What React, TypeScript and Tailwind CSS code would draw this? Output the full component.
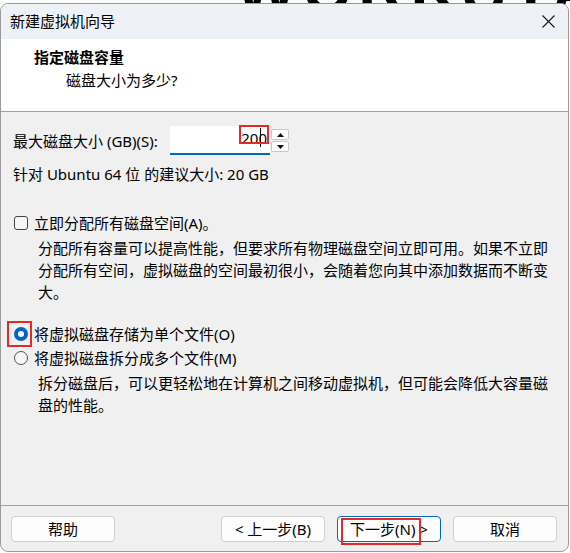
import React from "react";

const F = "font-['Noto_Sans','Noto_Sans_CJK_SC',sans-serif]";

function Btn({ children, primary }: { children: React.ReactNode; primary?: boolean }) {
  return (
    <div
      className={`relative w-[104px] h-[26px] rounded-[4px] border ${
        primary ? "border-[#0067c0]" : "border-[#d0d0d0]"
      } bg-[#fdfdfd] flex items-center justify-center text-[15px] leading-none text-black`}
    >
      {children}
    </div>
  );
}

export default function App() {
  return (
    <div className={`relative w-[570px] h-[553px] bg-white overflow-hidden ${F}`}>
      {/* background app text, behind the dialog */}
      <div className="absolute left-[236px] top-[-58px] text-[64px] font-bold tracking-[6px] text-black whitespace-nowrap font-['Liberation_Sans',sans-serif]">
        WORKSTATION PRO
      </div>

      <div className="relative mt-[3px] w-[569px] h-[549px] rounded-[8px] border border-[#9a9a9a] overflow-hidden flex flex-col bg-[#f0f0f0] text-black">
        {/* title bar */}
        <div className="h-[35px] bg-[#eef2f7] flex items-center justify-between pl-[9px] pr-[13px]">
          <span className="text-[15px] leading-none">新建虚拟机向导</span>
          <svg width="13" height="13" viewBox="0 0 13 13">
            <path d="M0.5 0.5 L12.5 12.5 M12.5 0.5 L0.5 12.5" stroke="#1a1a1a" strokeWidth="1.1" fill="none" />
          </svg>
        </div>

        {/* header */}
        <div className="h-[73px] bg-white border-b border-[#a0a0a0] pt-[7px]">
          <div className="pl-[33px] text-[15px] leading-[22px] font-bold">指定磁盘容量</div>
          <div className="pl-[65px] mt-[1px] text-[15px] leading-[22px]">磁盘大小为多少?</div>
        </div>

        {/* body */}
        <div className="flex-1 pl-[12px] text-[15px]">
          <div className="mt-[14px] flex items-center">
            <span className="w-[157px] leading-[22px] whitespace-nowrap">最大磁盘大小 (GB)(S):</span>
            <div className="relative w-[100px] h-[29px] bg-white border-b-2 border-[#0067c0] flex items-center justify-end pr-[3px]">
              <span className="leading-none -mt-[2px]">200</span>
              <div className="absolute left-[90px] top-[2px] w-px h-[19px] bg-black" />
              <div className="absolute left-[69px] top-[-1px] w-[30px] h-[19px] border-2 border-[#e02a2e]" />
            </div>
            <div className="ml-[1px] flex flex-col gap-[1px]">
              <div className="w-[18px] h-[11px] bg-white border border-[#c8c8c8] rounded-[2px] flex items-center justify-center">
                <svg width="7" height="4" viewBox="0 0 7 4"><path d="M0 4 L3.5 0 L7 4 Z" fill="#111" /></svg>
              </div>
              <div className="w-[18px] h-[11px] bg-white border border-[#c8c8c8] rounded-[2px] flex items-center justify-center">
                <svg width="7" height="4" viewBox="0 0 7 4"><path d="M0 0 L7 0 L3.5 4 Z" fill="#111" /></svg>
              </div>
            </div>
          </div>

          <div className="mt-[8px] leading-[22px]">针对 Ubuntu 64 位 的建议大小: 20 GB</div>

          <div className="mt-[27px] flex items-center leading-[22px]">
            <div className="ml-[1px] w-[14px] h-[14px] rounded-[3px] border border-[#444] bg-[#f7f7f7]" />
            <span className="ml-[6px]">立即分配所有磁盘空间(A)。</span>
          </div>

          <div className="mt-[3px] pl-[25px] leading-[22px] whitespace-nowrap">
            <div>分配所有容量可以提高性能，但要求所有物理磁盘空间立即可用。如果不立即</div>
            <div>分配所有空间，虚拟磁盘的空间最初很小，会随着您向其中添加数据而不断变</div>
            <div>大。</div>
          </div>

          <div className="mt-[20px] flex items-center leading-[22px]">
            <div className="relative ml-[1px] w-[14px] h-[14px] rounded-full bg-[#0067c0] flex items-center justify-center">
              <div className="w-[6px] h-[6px] rounded-full bg-white" />
              <div className="absolute left-[-7px] top-[-6px] w-[25px] h-[26px] border-2 border-[#e02a2e]" />
            </div>
            <span className="ml-[6px]">将虚拟磁盘存储为单个文件(O)</span>
          </div>

          <div className="mt-[2px] flex items-center leading-[22px]">
            <div className="ml-[1px] w-[14px] h-[14px] rounded-full border border-[#555] bg-[#f7f7f7]" />
            <span className="ml-[6px]">将虚拟磁盘拆分成多个文件(M)</span>
          </div>

          <div className="mt-[3px] pl-[25px] leading-[22px] whitespace-nowrap">
            <div>拆分磁盘后，可以更轻松地在计算机之间移动虚拟机，但可能会降低大容量磁</div>
            <div>盘的性能。</div>
          </div>
        </div>

        {/* footer */}
        <div className="h-[46px] border-t border-[#a0a0a0] pt-[10px] pl-[10px] pr-[11px] flex justify-between">
          <Btn>帮助</Btn>
          <div className="flex gap-[12px]">
            <Btn>&lt; 上一步(B)</Btn>
            <Btn primary>
              <span>下一步(N) &gt;</span>
              <div className="absolute left-[3px] top-[1px] w-[80px] h-[27px] border-2 border-[#e02a2e]" />
            </Btn>
            <Btn>取消</Btn>
          </div>
        </div>
      </div>
    </div>
  );
}
